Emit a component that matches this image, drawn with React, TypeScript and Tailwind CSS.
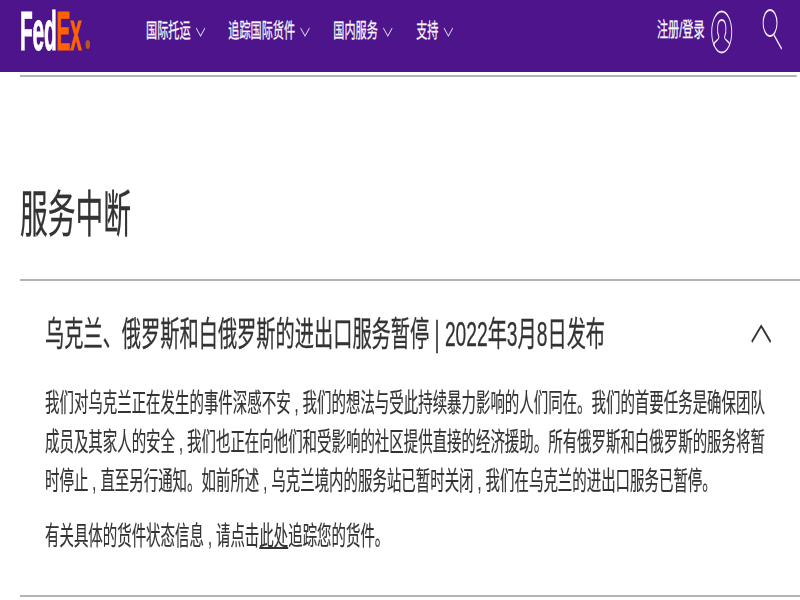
import React from "react";

const cjk = { fontFamily: '"Liberation Sans", "Noto Sans CJK SC", sans-serif' };

function Chevron() {
  return (
    <svg width="18" height="10" viewBox="0 0 18 10" fill="none" className="ml-[9px] mt-[1px]">
      <path d="M1 1 L9 9 L17 1" stroke="#d9cfe6" strokeWidth="1.4" />
    </svg>
  );
}

function NavItem({ label, className }: { label: string; className: string }) {
  return (
    <div className={`flex items-center ${className}`}>
      <span className="text-[20px] leading-[24px] text-[#f7f4fa] [-webkit-text-stroke:0.3px_#f7f4fa]">{label}</span>
      <Chevron />
    </div>
  );
}

export default function App() {
  return (
    <div className="w-[800px] h-[600px] overflow-hidden bg-white" style={cjk}>
      <div className="w-[1440px] origin-top-left scale-x-[0.5556] blur-[0.35px]">
        <header className="h-[72px] bg-[#4d148c] flex items-start">
          <div className="relative ml-[36px] w-[126px] mt-[3px] h-[56px]">
            <div className="origin-top-left scale-x-[0.67] whitespace-nowrap text-[56px] leading-[56px] font-bold tracking-[-0.5px] [-webkit-text-stroke:1px_currentColor]">
              <span className="text-white">Fed</span>
              <span className="text-[#ff6200]">Ex</span>
            </div>
            <div className="absolute left-[118px] top-[37px] w-[8px] h-[9px] rounded-full bg-[#b5561c]" />
          </div>
          <nav className="ml-[101px] mt-[19px] flex">
            <NavItem label="国际托运" className="w-[148px]" />
            <NavItem label="追踪国际货件" className="w-[189px]" />
            <NavItem label="国内服务" className="w-[149px]" />
            <NavItem label="支持" className="" />
          </nav>
          <div className="ml-auto mt-[18px] mr-[28px] flex items-start">
            <span className="text-[20px] leading-[24px] text-[#f7f4fa] [-webkit-text-stroke:0.3px_#f7f4fa]">注册/登录</span>
            <svg width="40" height="44" viewBox="0 0 40 44" fill="none" className="ml-[11px] -mt-[8px]" stroke="#ece7f2" strokeWidth="1.8">
              <ellipse cx="20" cy="22" rx="18" ry="20.5" />
              <path d="M6 36 V34 C8 30 15 31 15 27 C11 22 11 10 20 10 C29 10 29 22 25 27 C25 31 32 30 34 34 V36" />
            </svg>
            <svg width="40" height="42" viewBox="0 0 40 42" fill="none" className="ml-[53px] -mt-[9px]" stroke="#ece7f2" strokeWidth="2">
              <ellipse cx="14" cy="14" rx="12.5" ry="13" />
              <path d="M21 26 L35 40" />
            </svg>
          </div>
        </header>
        <div className="mt-[3px] ml-[36px] mr-[6px] h-[2px] bg-[#b3b3b3]" />
        <h1 className="ml-[36px] mt-[103px] text-[50px] leading-[70px] font-normal text-[#333333] [-webkit-text-stroke:0.3px_#333333]">服务中断</h1>
        <div className="mt-[29px] ml-[36px] h-[2px] bg-[#b3b3b3]" />
        <div className="pl-[81px] pr-[52px]">
          <div className="mt-[28px] flex items-center justify-between">
            <h2 className="text-[34.6px] leading-[50px] font-normal text-[#333333] [-webkit-text-stroke:0.3px_#333333]">
              乌克兰、俄罗斯和白俄罗斯的进出口服务暂停 | 2022年3月8日发布
            </h2>
            <svg width="36" height="20" viewBox="0 0 36 20" fill="none">
              <path d="M1 18 L18 2 L35 18" stroke="#333333" strokeWidth="2.6" />
            </svg>
          </div>
          <p className="mt-[25px] w-[1310px] text-[26px] leading-[39.2px] text-[#333333] [-webkit-text-stroke:0.2px_#333333]">
            我们对乌克兰正在发生的事件深感不安 , 我们的想法与受此持续暴力影响的人们同在。我们的首要任务是确保团队成员及其家人的安全 , 我们也正在向他们和受影响的社区提供直接的经济援助。所有俄罗斯和白俄罗斯的服务将暂时停止 , 直至另行通知。如前所述 , 乌克兰境内的服务站已暂时关闭 , 我们在乌克兰的进出口服务已暂停。
          </p>
          <p className="mt-[15px] text-[26px] leading-[39px] text-[#333333] [-webkit-text-stroke:0.2px_#333333]">
            有关具体的货件状态信息 , 请点击<span className="underline">此处</span>追踪您的货件。
          </p>
        </div>
        <div className="mt-[39px] ml-[36px] h-[2px] bg-[#b3b3b3]" />
      </div>
    </div>
  );
}
